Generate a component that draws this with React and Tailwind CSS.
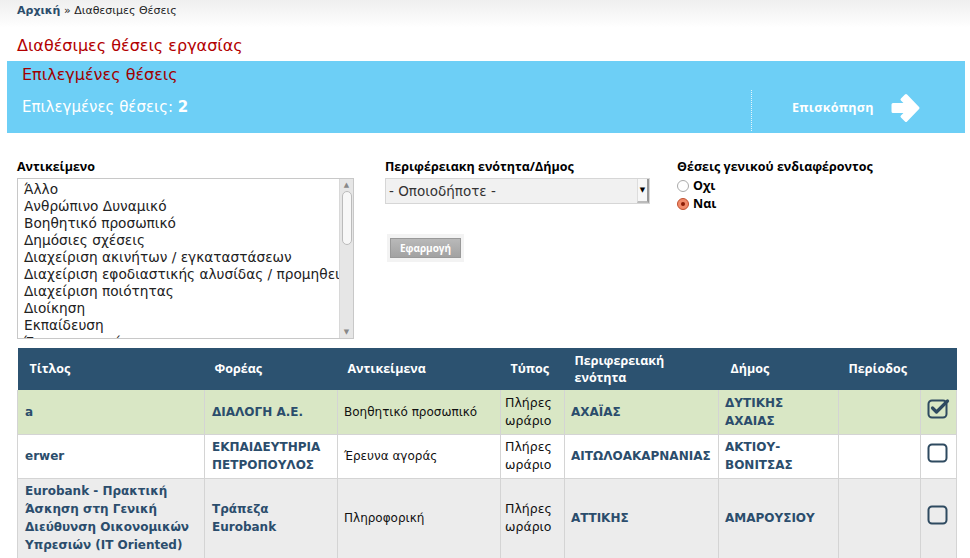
import React from 'react';

const options = [
  'Άλλο',
  'Ανθρώπινο Δυναμικό',
  'Βοηθητικό προσωπικό',
  'Δημόσιες σχέσεις',
  'Διαχείριση ακινήτων / εγκαταστάσεων',
  'Διαχείριση εφοδιαστικής αλυσίδας / προμηθειών',
  'Διαχείριση ποιότητας',
  'Διοίκηση',
  'Εκπαίδευση',
  'Έρευνα αγοράς',
];

const rows = [
  {
    title: 'a',
    org: 'ΔΙΑΛΟΓΗ Α.Ε.',
    subject: 'Βοηθητικό προσωπικό',
    region: 'ΑΧΑΪΑΣ',
    municipality: 'ΔΥΤΙΚΗΣ ΑΧΑΙΑΣ',
    checked: true,
    bg: 'bg-[#d9e7c5]',
    h: 'h-[44px]',
  },
  {
    title: 'erwer',
    org: 'ΕΚΠΑΙΔΕΥΤΗΡΙΑ ΠΕΤΡΟΠΟΥΛΟΣ',
    subject: 'Έρευνα αγοράς',
    region: 'ΑΙΤΩΛΟΑΚΑΡΝΑΝΙΑΣ',
    municipality: 'ΑΚΤΙΟΥ-ΒΟΝΙΤΣΑΣ',
    checked: false,
    bg: 'bg-white',
    h: 'h-[44px]',
  },
  {
    title: 'Eurobank - Πρακτική Άσκηση στη Γενική Διεύθυνση Οικονομικών Υπρεσιών (IT Oriented)',
    org: 'Τράπεζα Eurobank',
    subject: 'Πληροφορική',
    region: 'ΑΤΤΙΚΗΣ',
    municipality: 'ΑΜΑΡΟΥΣΙΟΥ',
    checked: false,
    bg: 'bg-[#ececec]',
    h: 'h-[80px]',
  },
];

const CheckIcon = ({ checked }) => (
  <svg width="23" height="21" viewBox="0 0 23 21">
    <rect x="1.5" y="2.5" width="18" height="17" rx="3.5" fill="none" stroke="#2e4a60" strokeWidth="2" />
    {checked && (
      <path d="M5.5 10 L9.5 14 L20.5 3" fill="none" stroke="#2e4a60" strokeWidth="3.2" strokeLinecap="round" strokeLinejoin="round" />
    )}
  </svg>
);

const Arrow = () => (
  <svg width="34" height="32" viewBox="0 0 34 32">
    <path d="M5 12.5 H19 L14 7.5 L18 3.5 L30 16 L18 28.5 L14 24.5 L19 19.5 H5 Z" fill="#fff" stroke="#fff" strokeWidth="3" strokeLinejoin="round" />
  </svg>
);

export default function App() {
  const sans = { fontFamily: '"DejaVu Sans", sans-serif' };
  const open = { fontFamily: '"Open Sans", sans-serif' };

  return (
    <div className="w-[970px] h-[558px] overflow-hidden bg-white" style={sans}>
      {/* breadcrumb */}
      <div className="h-[28px] bg-gradient-to-b from-[#efefef] to-white px-[17px] pt-[3px] text-[11px] text-[#222]">
        <span className="font-bold text-[#2b4d6c]">Αρχική</span> » Διαθεσιμες Θέσεις
      </div>

      <div className="px-[17px] pt-[8px] text-[16px] leading-[20px] text-[#b30000]">Διαθέσιμες θέσεις εργασίας</div>

      {/* selected band */}
      <div className="mx-[7px] mt-[5px] h-[72px] w-[958px] bg-[#6dcff6] flex">
        <div className="flex-1 pl-[15px]">
          <div className="pt-[4px] text-[16px] leading-[20px] text-[#a00000]">Επιλεγμένες θέσεις</div>
          <div className="pt-[11px] text-[15px] text-white">
            Επιλεγμένες θέσεις: <span className="font-bold">2</span>
          </div>
        </div>
        <div className="mt-[29px] mb-[2px] border-l border-dotted border-white/80" />
        <div className="w-[213px] flex items-center pl-[40px] pt-[22px] gap-[14px]">
          <span className="text-[12.5px] font-bold text-white tracking-[0.3px]" style={open}>Επισκόπηση</span>
          <Arrow />
        </div>
      </div>

      {/* filters */}
      <div className="flex px-[17px] pt-[26px]">
        <div className="w-[368px]">
          <div className="text-[12.5px] font-bold text-black leading-[16px]" style={open}>Αντικείμενο</div>
          <div className="mt-[3px] w-[337px] h-[161px] border border-[#c8c8c8] flex overflow-hidden">
            <div className="flex-1 pl-[6px] pt-[2px] overflow-hidden">
              {options.map((o) => (
                <div key={o} className="text-[13.7px] leading-[17px] text-[#222] whitespace-nowrap">{o}</div>
              ))}
            </div>
            <div className="w-[14px] bg-[#e6e6e6] border-l border-[#d8d8d8] flex flex-col items-center py-[2px]">
              <div className="text-[7px] leading-[8px] text-[#888]">▲</div>
              <div className="mt-[2px] w-[10px] h-[54px] rounded-[5px] bg-[#f7f7f7] border border-[#bbb]" />
              <div className="flex-1" />
              <div className="text-[7px] leading-[8px] text-[#888]">▼</div>
            </div>
          </div>
        </div>

        <div className="w-[292px]">
          <div className="text-[12.5px] font-bold text-black leading-[16px]" style={open}>Περιφέρειακη ενότητα/Δήμος</div>
          <div className="mt-[3px] w-[265px] h-[26px] border border-[#d6d6d6] bg-[#f1f1f1] flex items-center">
            <span className="flex-1 pl-[3px] text-[13.5px] text-[#333]">- Οποιοδήποτε -</span>
            <div className="w-[12px] h-full border-l border-r-2 border-b-2 border-l-[#ddd] border-r-[#999] border-b-[#bbb] bg-[#f7f7f7] flex items-center justify-center text-[7px] text-black">▼</div>
          </div>
          <div className="mt-[30px] ml-[2px] w-[77px] h-[28px] bg-[#f3f3f3] flex items-center justify-center">
            <div className="w-[71px] h-[20px] bg-gradient-to-b from-[#b9b9b9] to-[#a2a2a2] border border-[#999] flex items-center justify-center text-[10px] font-bold text-white" style={open}>Εφαρμογή</div>
          </div>
        </div>

        <div>
          <div className="text-[12.5px] font-bold text-black leading-[16px]" style={open}>Θέσεις γενικού ενδιαφέροντος</div>
          <div className="mt-[2px] flex items-center gap-[4px] h-[18px]">
            <span className="w-[12px] h-[12px] rounded-full border border-[#aaa] bg-white" />
            <span className="text-[12.5px] font-bold text-black" style={open}>Οχι</span>
          </div>
          <div className="flex items-center gap-[4px] h-[18px]">
            <span className="w-[12px] h-[12px] rounded-full border border-[#c0502f] bg-[#f08a6a] flex items-center justify-center">
              <span className="w-[4px] h-[4px] rounded-full bg-[#8a1c05]" />
            </span>
            <span className="text-[12.5px] font-bold text-black" style={open}>Ναι</span>
          </div>
        </div>
      </div>

      {/* table */}
      <div className="px-[17px] pt-[9px]">
        <table className="w-[939px] border-collapse table-fixed">
          <colgroup>
            <col className="w-[187px]" />
            <col className="w-[133px]" />
            <col className="w-[163px]" />
            <col className="w-[64px]" />
            <col className="w-[154px]" />
            <col className="w-[120px]" />
            <col className="w-[82px]" />
            <col className="w-[36px]" />
          </colgroup>
          <thead>
            <tr className="h-[42px] bg-[#2c5270] text-white text-[12.5px] font-bold text-left" style={open}>
              <th className="px-[12px] font-bold">Τίτλος</th>
              <th className="px-[10px] font-bold">Φορέας</th>
              <th className="px-[10px] font-bold">Αντικείμενα</th>
              <th className="px-[10px] font-bold">Τύπος</th>
              <th className="px-[10px] font-bold leading-[17px]">Περιφερειακή<br />ενότητα</th>
              <th className="px-[12px] font-bold">Δήμος</th>
              <th className="px-[10px] font-bold">Περίοδος</th>
              <th />
            </tr>
          </thead>
          <tbody>
            {rows.map((r) => (
              <tr key={r.title} className={`${r.bg} ${r.h} border-b border-[#d4d4d4]`}>
                <td className="px-[7px] border-x border-[#d4d4d4] text-[12px] font-bold text-[#2b4d6c] leading-[18px]">{r.title}</td>
                <td className="px-[7px] border-x border-[#d4d4d4] text-[12px] font-bold text-[#2b4d6c] leading-[18px]">{r.org}</td>
                <td className="px-[6px] border-x border-[#d4d4d4] text-[12px] text-[#111] leading-[18px]">{r.subject}</td>
                <td className="pl-[4px] pr-[2px] border-x border-[#d4d4d4] text-[12.5px] text-[#111] leading-[18px]">Πλήρες ωράριο</td>
                <td className="px-[6px] border-x border-[#d4d4d4] text-[12px] font-bold text-[#2b4d6c] leading-[18px]">{r.region}</td>
                <td className="px-[6px] border-x border-[#d4d4d4] text-[12px] font-bold text-[#2b4d6c] leading-[18px]">{r.municipality}</td>
                <td className="border-x border-[#d4d4d4]" />
                <td className="border-x border-[#d4d4d4] text-center align-middle">
                  <span className="inline-flex"><CheckIcon checked={r.checked} /></span>
                </td>
              </tr>
            ))}
          </tbody>
        </table>
      </div>
    </div>
  );
}
